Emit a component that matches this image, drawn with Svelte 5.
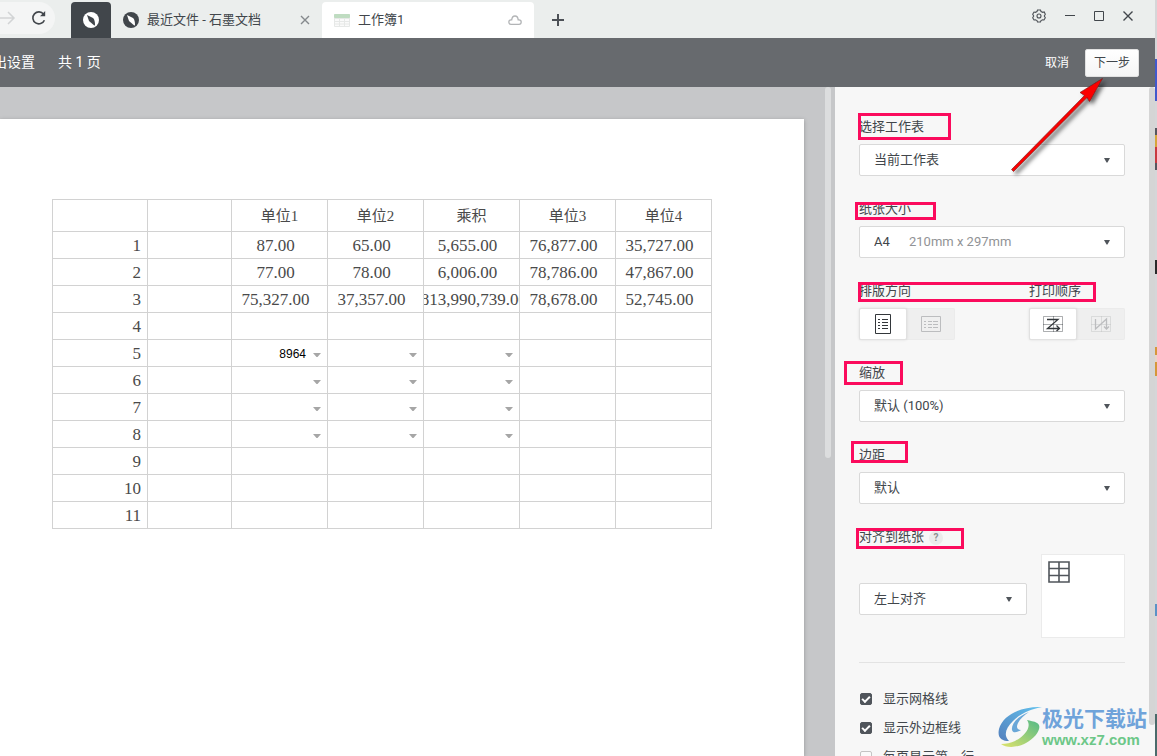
<script lang="ts">
  interface Cell {
    text?: string;
    filter?: boolean;
  }

  const headers = ['', '', '单位1', '单位2', '乘积', '单位3', '单位4'];

  const values: Record<number, string[]> = {
    1: ['87.00', '65.00', '5,655.00', '76,877.00', '35,727.00'],
    2: ['77.00', '78.00', '6,006.00', '78,786.00', '47,867.00'],
    3: ['75,327.00', '37,357.00', '2,813,990,739.00', '78,678.00', '52,745.00'],
  };

  function cellsFor(row: number): Cell[] {
    return [0, 1, 2, 3, 4].map((col) => ({
      text: values[row]?.[col],
      filter: row >= 5 && row <= 8 && col < 3,
    }));
  }

  const rows = Array.from({ length: 11 }, (_, i) => ({ n: i + 1, cells: cellsFor(i + 1) }));

  let picked = $state('8964');
  let sheet = $state('当前工作表');
  let paper = $state('A4');
  let zoom = $state('默认 (100%)');
  let margin = $state('默认');
  let align = $state('左上对齐');
  let portrait = $state(true);
  let rowFirst = $state(true);
  let gridLines = $state(true);
  let outerBorder = $state(true);
  let repeatHeader = $state(false);

  // callout frames drawn over the settings panel: x, y, width, height
  const frames = [
    [858, 113, 93, 27],
    [855, 202, 81, 18],
    [858, 282, 238, 20],
    [844, 361, 59, 24],
    [851, 441, 57, 22],
    [856, 528, 108, 21],
  ];
</script>

{#snippet logo(disc: string, needle: string)}
  <svg width="16" height="16" viewBox="0 0 16 16">
    <circle cx="8" cy="8" r="8" fill={disc} />
    <path d="M4 3 10 6Q12 7.500 12 13.500L11 13.200L6 9Z" fill={needle} />
  </svg>
{/snippet}

{#snippet caret()}
  <svg class="caret" width="6" height="5" viewBox="0 0 6 5"><path d="M0 0H6L3.5 4.5H2.5Z" fill="#50555b" /></svg>
{/snippet}

<div class="app">
  <div class="window">
    <header class="tabs">
      <div class="nav">
        <button class="icon-btn" aria-label="前进">
          <svg width="16" height="14" viewBox="0 0 16 14" fill="none" stroke="#d2d4d5" stroke-width="1.5"><path d="M0 7H14M8 1L14 7L8 13" /></svg>
        </button>
        <button class="icon-btn" aria-label="刷新">
          <svg width="16" height="16" viewBox="0 0 16 16" fill="none" stroke="#41464b" stroke-width="1.6">
            <path d="M13.4 10.2A6 6 0 1 1 12.6 4.2" />
            <path d="M14.2 1V6.2H9Z" fill="#41464b" stroke="none" />
          </svg>
        </button>
      </div>
      <button class="home" aria-label="首页">{@render logo('#fff', '#41464b')}</button>
      <div class="tab">
        {@render logo('#41464b', '#fff')}
        <span class="tab-title">最近文件 - 石墨文档</span>
        <button class="icon-btn" aria-label="关闭标签">
          <svg width="10" height="10" viewBox="0 0 10 10" stroke="#85898d" stroke-width="1.4"><path d="M1 1L9 9M9 1L1 9" /></svg>
        </button>
      </div>
      <div class="tab active">
        <svg width="16" height="13" viewBox="0 0 16 13">
          <rect width="16" height="13" rx="1" fill="#e6e8e7" />
          <rect width="16" height="4" rx="1" fill="#bfdcc1" />
          <path d="M1 5H5V7H1ZM6 5H10V7H6ZM11 5H15V7H11ZM1 8H5V9.500H1ZM6 8H10V9.500H6ZM11 8H15V9.500H11ZM1 10.500H5V12H1ZM6 10.500H10V12H6ZM11 10.500H15V12H11Z" fill="#fafafa" />
        </svg>
        <span class="tab-title">工作簿1</span>
        <svg width="14" height="10" viewBox="0 0 14 10" fill="none" stroke="#b2b4b6" stroke-width="1.3">
          <path d="M3 9.300H11A2.200 2.200 0 0 0 11 4.900H10.200Q9.800 1 7 1T3.700 4.900H3A2.200 2.200 0 0 0 3 9.300Z" />
        </svg>
      </div>
      <button class="icon-btn add" aria-label="新建标签">
        <svg width="12" height="12" viewBox="0 0 12 12" stroke="#4c5056" stroke-width="2"><path d="M6 0V12M0 6H12" /></svg>
      </button>
      <div class="win-controls">
        <button class="icon-btn" aria-label="设置">
          <svg width="14" height="14" viewBox="0 0 14 14" fill="none" stroke="#4c5056" stroke-width="1.1">
            <path d="M5.500 1H8.500L9 2.500L10.800 3.300L12.200 3L13.300 5.300L12.300 7L13.300 8.800L12 11L10.600 10.800L9 11.600L8.500 13H5.500L5 11.600L3.400 10.800L2 11L.7 8.800L1.700 7L.7 5.300L2 3L3.400 3.300L5 2.500Z" />
            <circle cx="7" cy="7" r="2" />
          </svg>
        </button>
        <button class="icon-btn" aria-label="最小化">
          <svg width="10" height="10" viewBox="0 0 10 10"><path d="M0 4H10V5H0Z" fill="#41464b" /></svg>
        </button>
        <button class="icon-btn" aria-label="最大化">
          <svg width="10" height="10" viewBox="0 0 10 10"><path d="M.5.5H9.500V9.500H.5Z" fill="none" stroke="#41464b" /></svg>
        </button>
        <button class="icon-btn" aria-label="关闭">
          <svg width="10" height="10" viewBox="0 0 10 10" stroke="#41464b" stroke-width="1.4"><path d="M.5.5L9.500 9.500M9.500.5L.5 9.500" /></svg>
        </button>
      </div>
    </header>

    <div class="toolbar">
      <span class="title">导出设置</span>
      <span class="pages">共 1 页</span>
      <button class="cancel">取消</button>
      <button class="next">下一步</button>
    </div>

    <div class="body">
      <main class="preview">
        <div class="paper">
          <table>
            <colgroup>
              <col class="col-index" />
              <col class="col-gap" />
              <col span="5" class="col-value" />
            </colgroup>
            <thead>
              <tr>
                {#each headers as head}
                  <th>{head}</th>
                {/each}
              </tr>
            </thead>
            <tbody>
              {#each rows as row}
                <tr>
                  <td class="index">{row.n}</td>
                  <td></td>
                  {#each row.cells as cell, col}
                    <td>
                      {#if cell.text}
                        <div class="value">{cell.text}</div>
                      {:else if cell.filter}
                        <div class="filter">
                          {#if row.n === 5 && col === 0}<span>{picked}</span>{/if}
                          <button class="icon-btn" aria-label="下拉选项">
                            <svg width="8" height="4" viewBox="0 0 8 4"><path d="M0 0H8L4.500 4H3.500Z" fill="#a6a6a6" /></svg>
                          </button>
                        </div>
                      {/if}
                    </td>
                  {/each}
                </tr>
              {/each}
            </tbody>
          </table>
        </div>
        <div class="scrollbar"></div>
      </main>

      <aside class="panel">
        <section class="group">
          <label for="sheet">选择工作表</label>
          <div class="select">
            <select id="sheet" bind:value={sheet}><option>当前工作表</option></select>
            {@render caret()}
          </div>
        </section>

        <section class="group">
          <label for="paper">纸张大小</label>
          <div class="select">
            <select id="paper" bind:value={paper}><option>A4</option></select>
            <span class="dimensions">210mm x 297mm</span>
            {@render caret()}
          </div>
        </section>

        <div class="pair">
          <section class="group">
            <span class="label">排版方向</span>
            <div class="toggle">
              <button class:on={portrait} onclick={() => (portrait = true)} aria-label="纵向">
                <svg width="16" height="20" viewBox="0 0 16 20" fill="none" stroke="currentColor">
                  <path d="M.5.5H15.500V19.500H.5Z" />
                  <path d="M3 5.500H5M3 8.500H5M3 11.500H5M3 14.500H5M7 5.500H13M7 8.500H13M7 11.500H13M7 14.500H13" />
                </svg>
              </button>
              <button class:on={!portrait} onclick={() => (portrait = false)} aria-label="横向">
                <svg width="20" height="16" viewBox="0 0 20 16" fill="none" stroke="currentColor">
                  <path d="M.5.5H19.500V15.500H.5Z" />
                  <path d="M3 5.500H5M3 8.500H5M3 11.500H5M7 5.500H11M7 8.500H11M7 11.500H11M12 5.500H17M12 8.500H17M12 11.500H17" />
                </svg>
              </button>
            </div>
          </section>
          <section class="group">
            <span class="label">打印顺序</span>
            <div class="toggle">
              <button class:on={rowFirst} onclick={() => (rowFirst = true)} aria-label="先行后列">
                <svg width="20" height="16" viewBox="0 0 20 16" fill="none" stroke="currentColor">
                  <path d="M.5.5H19.500V15.500H.5ZM10.500 0V16M0 8.500H20" opacity=".4" />
                  <path d="M4 3.500H15L4.500 12.500H16M13.500 9.500L16.500 12.500L13.500 15" stroke-width="1.300" />
                </svg>
              </button>
              <button class:on={!rowFirst} onclick={() => (rowFirst = false)} aria-label="先列后行">
                <svg width="20" height="16" viewBox="0 0 20 16" fill="none" stroke="currentColor">
                  <path d="M.5.5H19.500V15.500H.5ZM10.500 0V16M0 8.500H20" opacity=".4" />
                  <path d="M4.500 3V13L15.500 3V13M13 10.500L15.500 13L18 10.500" stroke-width="1.300" />
                </svg>
              </button>
            </div>
          </section>
        </div>

        <section class="group">
          <label for="zoom">缩放</label>
          <div class="select">
            <select id="zoom" bind:value={zoom}><option>默认 (100%)</option></select>
            {@render caret()}
          </div>
        </section>

        <section class="group">
          <label for="margin">边距</label>
          <div class="select">
            <select id="margin" bind:value={margin}><option>默认</option></select>
            {@render caret()}
          </div>
        </section>

        <section class="group">
          <div class="label-row">
            <label for="align">对齐到纸张</label>
            <button class="help" aria-label="帮助">?</button>
          </div>
          <div class="align-row">
            <div class="select">
              <select id="align" bind:value={align}><option>左上对齐</option></select>
              {@render caret()}
            </div>
            <div class="align-preview">
              <svg width="22" height="22" viewBox="0 0 22 22" fill="none" stroke="#50555b" stroke-width="1.600">
                <path d="M1 1H21V21H1ZM11 1V21M1 7.500H21M1 14.500H21" />
              </svg>
            </div>
          </div>
        </section>

        <div class="options">
          <label><input type="checkbox" bind:checked={gridLines} /><span>显示网格线</span></label>
          <label><input type="checkbox" bind:checked={outerBorder} /><span>显示外边框线</span></label>
          <label><input type="checkbox" bind:checked={repeatHeader} /><span>每页显示第一行</span></label>
        </div>
        <div class="scrollbar"></div>
      </aside>
    </div>
  </div>

  <!-- sliver of the desktop behind the window -->
  <svg class="desktop" viewBox="0 0 2 756" preserveAspectRatio="xMinYMin slice">
    <rect width="2" height="756" fill="#d6d6d8" />
    <rect y="59" width="2" height="42" fill="#4259cb" />
    <rect y="128" width="2" height="42" fill="#56565e" />
    <rect y="135" width="2" height="12" fill="#d6a53a" />
    <rect y="147" width="2" height="16" fill="#c8393f" />
    <rect y="260" width="2" height="14" fill="#2a2a2a" />
    <rect y="347" width="2" height="29" fill="#d6973a" />
    <rect y="355" width="2" height="7" fill="#e8d5c8" />
    <rect y="604" width="2" height="12" fill="#5b92c6" />
    <rect y="714" width="2" height="42" fill="#4a6b6b" />
  </svg>

  <svg class="marks" width="322" height="640" viewBox="835 0 322 640">
    <defs>
      <filter id="arrow-shadow" x="-20%" y="-20%" width="150%" height="150%">
        <feDropShadow dx="3" dy="3" stdDeviation="2" flood-color="#000" flood-opacity=".6" />
      </filter>
    </defs>
    {#each frames as [x, y, w, h]}
      <rect x={x + 1.5} y={y + 1.5} width={w - 3} height={h - 3} fill="none" stroke="#fb0b5d" stroke-width="3" />
    {/each}
    <path
      d="M1011.500 169.500L1084.500 95.500L1080 92.500L1102.500 78.500L1089.500 101.500L1087 97.500L1013.500 171.500Z"
      fill="#fb0505"
      stroke="#6e1010"
      stroke-width=".6"
      filter="url(#arrow-shadow)"
    />
  </svg>

  <div class="watermark">
    <svg width="44" height="42" viewBox="0 0 44 42">
      <defs>
        <linearGradient id="wm-blue" x1="0" y1="1" x2="1" y2="0">
          <stop offset="0" stop-color="#5480bd" />
          <stop offset="1" stop-color="#62c2ee" />
        </linearGradient>
        <linearGradient id="wm-green" x1="0" y1="1" x2="1" y2="0">
          <stop offset="0" stop-color="#dfe36b" />
          <stop offset="1" stop-color="#53b987" />
        </linearGradient>
      </defs>
      <path d="M44 1C25 0 5 8 1 23C-1 32 4 35 11 35C5 29 8 22 15 15C23 7 33 3 44 1Z" fill="url(#wm-blue)" />
      <path d="M31 6C20 10 13 18 14 24C15 28 20 26 23 24C19 24 18 21 20 17C22 13 26 9 31 6Z" fill="#6aa7d8" />
      <path d="M29 14C34 21 27 30 17 35C13 37 8 38 3 38C8 42 19 42 28 37C39 31 45 20 39 17C36 15 32 15 29 14Z" fill="url(#wm-green)" />
    </svg>
    <div>
      <div class="wm-name">极光下载站</div>
      <div class="wm-url">www.xz7.com</div>
    </div>
  </div>
</div>

<style>
  :global(body) {
    overflow: hidden;
  }

  .app {
    position: relative;
    display: flex;
    height: 100vh;
    overflow: hidden;
    font-family: Roboto, "Noto Sans CJK SC", sans-serif;
    font-size: 13px;
    color: #41464b;
  }

  .app * {
    box-sizing: border-box;
  }

  svg {
    display: block;
    flex: none;
  }

  button {
    font: inherit;
    color: inherit;
    cursor: pointer;
  }

  .icon-btn {
    padding: 0;
    border: 0;
    background: none;
  }

  .window {
    flex: 1;
    min-width: 0;
    display: flex;
    flex-direction: column;
  }

  .desktop {
    width: 2px;
    height: 100%;
  }

  .tabs {
    display: flex;
    align-items: flex-end;
    height: 38px;
    background: #ebeeed;
  }

  .nav {
    display: flex;
    align-items: center;
    align-self: flex-start;
    gap: 15px;
    height: 32px;
    margin: 2px 16px 0 0;
    padding-right: 8px;
    border-radius: 0 16px 16px 0;
    background: #f4f5f5;
  }

  .home {
    display: grid;
    place-items: center;
    width: 40px;
    height: 36px;
    padding: 0;
    border: 0;
    border-radius: 4px 4px 0 0;
    background: #41464b;
  }

  .tab {
    display: flex;
    align-items: center;
    gap: 8px;
    width: 211px;
    height: 36px;
    padding: 0 12px;
    border-radius: 4px 4px 0 0;
  }

  .tab.active {
    width: 212px;
    background: #fff;
  }

  .tab-title {
    flex: 1;
    padding-bottom: 4px;
    white-space: nowrap;
  }

  .add {
    align-self: center;
    margin: 2px 0 0 18px;
  }

  .win-controls {
    display: flex;
    align-items: center;
    align-self: flex-start;
    gap: 19px;
    height: 32px;
    margin-left: auto;
    padding-right: 22px;
  }

  .toolbar {
    display: flex;
    align-items: center;
    height: 49px;
    padding-right: 16px;
    overflow: hidden;
    background: #676a6e;
    color: #fff;
    font-size: 14px;
  }

  .title {
    margin: 0 23px 0 -21px;
    padding-bottom: 4px;
  }

  .pages {
    padding-bottom: 4px;
  }

  .cancel {
    margin-left: auto;
    padding: 0 16px 2px;
    border: 0;
    background: none;
    font-size: 12px;
  }

  .next {
    height: 28px;
    padding: 0 8px 2px;
    border: 1px solid #e1e1e1;
    border-radius: 2px;
    background: linear-gradient(#fff, #f5f5f5);
    color: #41464b;
    font-size: 12px;
  }

  .body {
    flex: 1;
    min-height: 0;
    display: flex;
  }

  .preview {
    position: relative;
    flex: 1;
    min-width: 0;
    display: flex;
    padding: 32px 31px 0 0;
    background: #c6c7c9;
    overflow: hidden;
  }

  .paper {
    flex: 1;
    padding: 80px 52px 0;
    background: #fff;
    box-shadow: 0 1px 4px rgba(0, 0, 0, 0.25);
  }

  .scrollbar {
    position: absolute;
    top: 0;
    right: 4px;
    width: 6px;
    height: 371px;
    border-radius: 3px;
    background: #dcddde;
  }

  table {
    width: 660px;
    border-collapse: collapse;
    table-layout: fixed;
    color: #4a4a4a;
    font-family: "Liberation Serif", "Noto Sans CJK SC", serif;
    font-size: 17px;
  }

  .col-index { width: 95px; }
  .col-gap { width: 84px; }
  .col-value { width: 96px; }

  th,
  td {
    height: 27px;
    padding: 2px 0 0;
    border: 1px solid #d2d2d2;
    line-height: 20px;
    overflow: hidden;
  }

  th {
    height: 32px;
    padding: 0;
    font-size: 15px;
    font-weight: 400;
  }

  .index {
    padding-right: 6px;
    text-align: right;
  }

  .value {
    display: flex;
    justify-content: center;
    padding-right: 8px;
    white-space: nowrap;
  }

  .filter {
    display: flex;
    align-items: center;
    justify-content: flex-end;
    gap: 7px;
    padding-right: 6px;
    font-family: "Liberation Sans", sans-serif;
    font-size: 12px;
    color: #000;
  }

  .filter .icon-btn {
    padding-top: 2px;
  }

  .panel {
    position: relative;
    width: 320px;
    padding: 31px 30px 0 24px;
    background: #f7f7f7;
    overflow: hidden;
  }

  .panel .scrollbar {
    right: 0;
    height: 638px;
    background: #d5d5d5;
  }

  .group {
    margin-bottom: 24px;
  }

  .group label,
  .label {
    display: block;
    height: 18px;
    margin-bottom: 8px;
    line-height: 18px;
  }

  .label-row {
    display: flex;
    gap: 5px;
  }

  .help {
    width: 14px;
    height: 14px;
    margin-top: 3px;
    padding: 0;
    border: 0;
    border-radius: 50%;
    background: #ebebeb;
    color: #8c8f92;
    font-size: 10px;
    font-weight: 700;
    line-height: 14px;
  }

  .select {
    position: relative;
    flex: 1;
    height: 32px;
  }

  .select select {
    appearance: none;
    width: 100%;
    height: 32px;
    padding: 0 30px 2px 14px;
    border: 1px solid #d9d9d9;
    border-radius: 2px;
    background: #fff;
    color: #41464b;
    font: inherit;
  }

  .caret {
    position: absolute;
    top: 14px;
    right: 15px;
    pointer-events: none;
  }

  .dimensions {
    position: absolute;
    top: 0;
    left: 50px;
    line-height: 32px;
    color: #919396;
    pointer-events: none;
  }

  .pair {
    display: flex;
    justify-content: space-between;
  }

  .toggle {
    display: flex;
    width: 96px;
    height: 32px;
    border-radius: 2px;
    background: #efefef;
    box-shadow: inset 0 0 0 1px #ebebeb;
  }

  .toggle button {
    display: grid;
    place-items: center;
    flex: 1;
    padding: 0;
    border: 1px solid transparent;
    border-radius: 2px;
    background: none;
    color: #bcbdbf;
  }

  .toggle .on {
    border-color: #e1e1e1;
    background: #fff;
    box-shadow: 0 0 3px rgba(0, 0, 0, 0.1);
    color: #33373b;
  }

  .align-row {
    display: flex;
    align-items: center;
    gap: 14px;
  }

  .align-row .select {
    margin-top: 6px;
  }

  .align-preview {
    width: 84px;
    height: 84px;
    padding: 6px;
    border: 1px solid #ebebeb;
    background: #fff;
  }

  .options {
    padding-top: 21px;
    border-top: 1px solid #e3e3e3;
  }

  .options label {
    display: flex;
    align-items: center;
    gap: 11px;
    height: 29px;
  }

  .options span {
    padding-bottom: 2px;
  }

  .options input {
    appearance: none;
    width: 12px;
    height: 12px;
    margin: 0 0 0 1px;
    border: 1px solid #c4c4c4;
    border-radius: 2px;
    background: #fafafa;
  }

  .options input:checked {
    border-color: #50555b;
    background: #50555b;
  }

  .options input:checked::before {
    content: "";
    display: block;
    box-sizing: border-box;
    width: 8px;
    height: 5px;
    margin: 2px 0 0 1px;
    border: solid #fff;
    border-width: 0 0 2px 2px;
    transform: rotate(-45deg);
  }

  .marks {
    position: absolute;
    top: 0;
    right: 0;
    pointer-events: none;
  }

  .watermark {
    position: absolute;
    right: 10px;
    bottom: 8px;
    display: flex;
    align-items: flex-end;
    pointer-events: none;
  }

  .wm-name {
    color: #6fa3da;
    font-size: 21px;
    font-weight: 700;
    line-height: 26px;
  }

  .wm-url {
    color: #6cc788;
    font-family: "Liberation Sans", sans-serif;
    font-size: 15px;
    font-weight: 700;
    line-height: 16px;
  }
</style>
